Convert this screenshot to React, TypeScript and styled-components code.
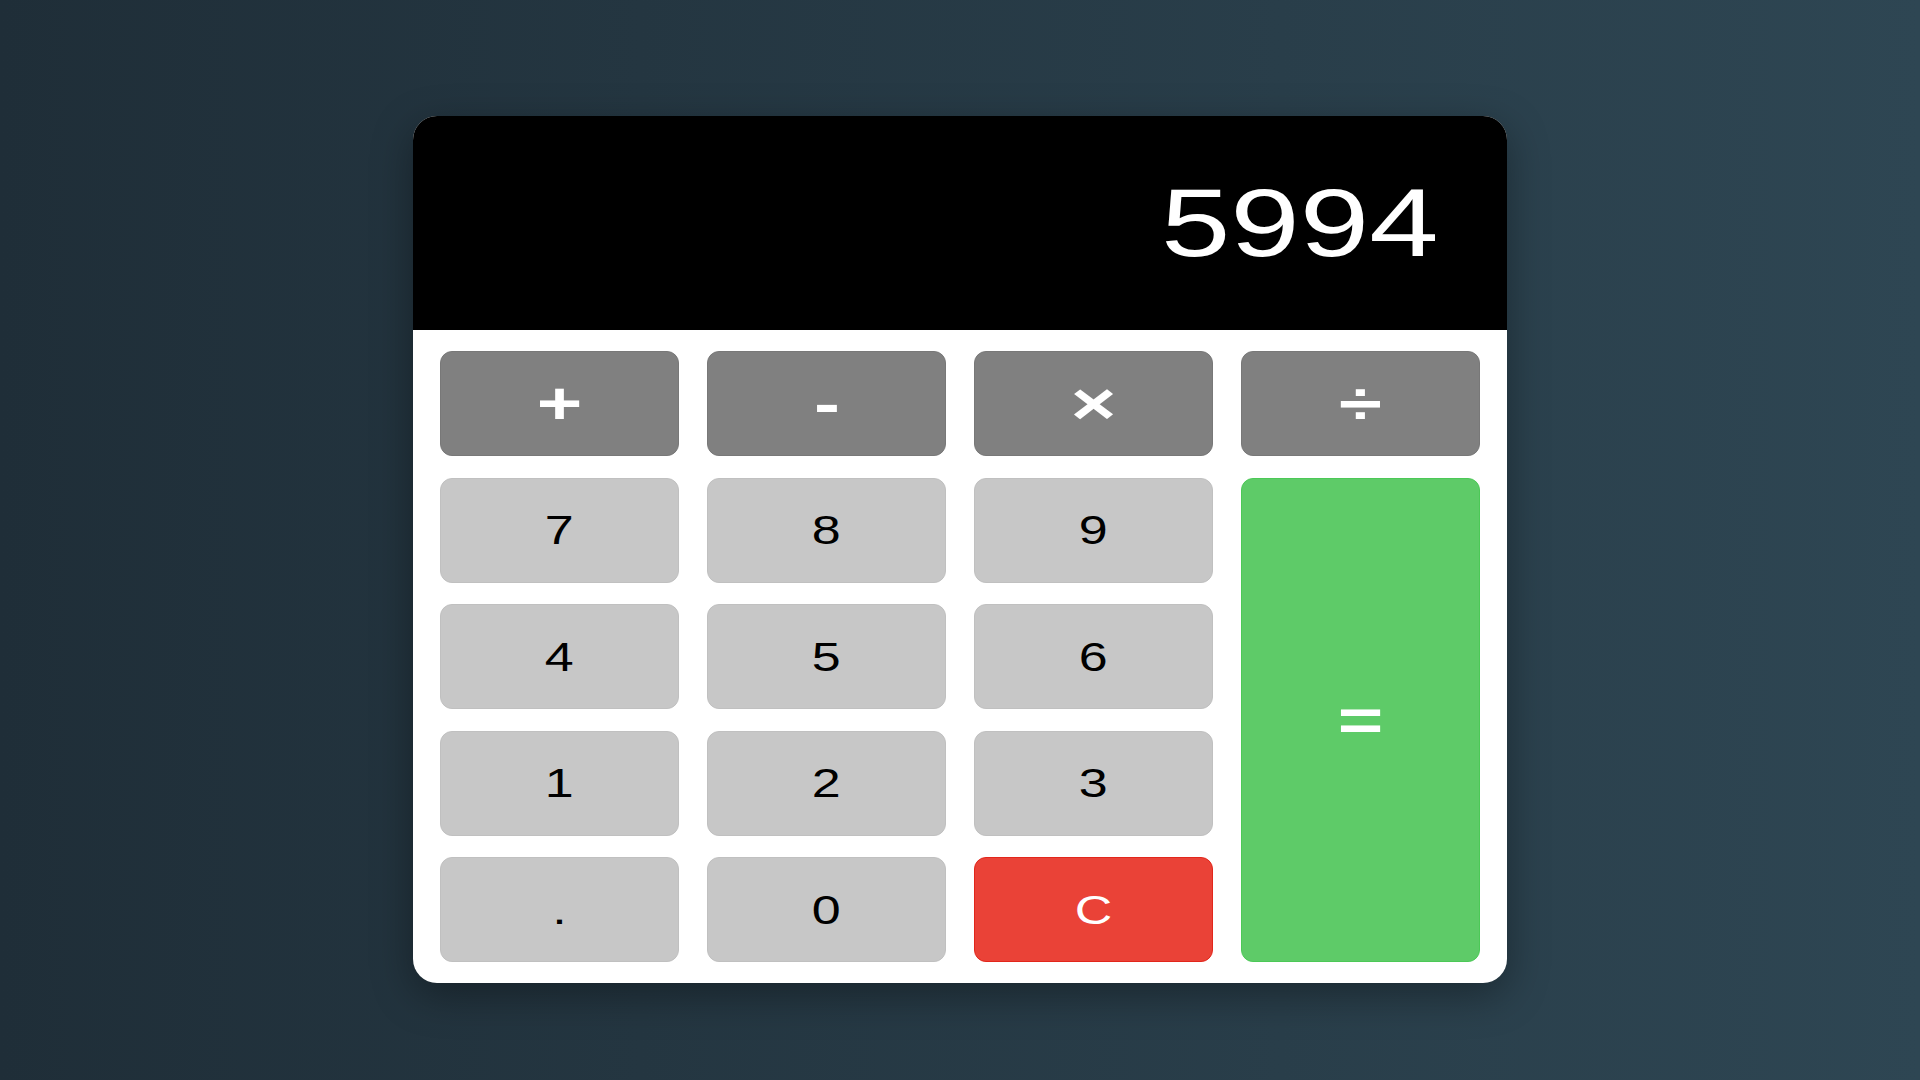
import React from "react";
import styled, { createGlobalStyle, css } from "styled-components";

const GlobalStyle = createGlobalStyle`
  html, body {
    margin: 0;
    padding: 0;
  }
  body {
    font-family: "Liberation Sans", Arial, sans-serif;
    background: linear-gradient(90deg, #1f2e38 0%, #2e4653 100%);
    min-height: 100vh;
  }
`;

const Page = styled.main`
  width: 100%;
  height: 1080px;
  display: flex;
  justify-content: center;
  align-items: flex-start;
  padding-top: 116px;
  box-sizing: border-box;
  background: linear-gradient(90deg, #1f2e38 0%, #2e4653 100%);
`;

const Calculator = styled.div`
  width: 1094px;
  background: #ffffff;
  border-radius: 24px;
  overflow: hidden;
  box-shadow: 0 12px 40px rgba(0, 0, 0, 0.35);
  display: flex;
  flex-direction: column;
`;

const Display = styled.div`
  height: 214px;
  background: #000000;
  color: #ffffff;
  display: flex;
  align-items: center;
  justify-content: flex-end;
  padding-right: 100px;
  box-sizing: border-box;
  font-size: 96px;
  font-weight: 400;
`;

const Keypad = styled.div`
  display: grid;
  grid-template-columns: repeat(4, 239px);
  grid-auto-rows: 105px;
  column-gap: 28px;
  row-gap: 21.5px;
  padding: 21px 27px;
`;

type Variant = "op" | "num" | "clear" | "equals";

const variants: Record<Variant, ReturnType<typeof css>> = {
  op: css`
    background: #808080;
    border-color: #787878;
    color: #ffffff;
    font-size: 60px;
    font-weight: 700;
  `,
  num: css`
    background: #c7c7c7;
    border-color: #c0c0c0;
    color: #000000;
    font-size: 40px;
    font-weight: 400;
  `,
  clear: css`
    background: #ea4237;
    border-color: #e2261b;
    color: #ffffff;
    font-size: 40px;
    font-weight: 400;
  `,
  equals: css`
    background: #5ecb68;
    border-color: #4cc957;
    color: #ffffff;
    font-size: 60px;
    font-weight: 700;
    grid-column: 4;
    grid-row: 2 / span 4;
  `,
};

const Key = styled.button<{ $variant: Variant }>`
  font-family: "Liberation Sans", Arial, sans-serif;
  border: 1px solid;
  border-radius: 12px;
  display: flex;
  align-items: center;
  justify-content: center;
  padding: 0;
  margin: 0;
  cursor: pointer;
  line-height: 1;
  ${({ $variant }) => variants[$variant]}
`;

const Label = styled.span`
  display: inline-block;
  transform: scaleX(1.3);
`;

const keys: { label: string; variant: Variant }[] = [
  { label: "+", variant: "op" },
  { label: "-", variant: "op" },
  { label: "×", variant: "op" },
  { label: "÷", variant: "op" },
  { label: "7", variant: "num" },
  { label: "8", variant: "num" },
  { label: "9", variant: "num" },
  { label: "=", variant: "equals" },
  { label: "4", variant: "num" },
  { label: "5", variant: "num" },
  { label: "6", variant: "num" },
  { label: "1", variant: "num" },
  { label: "2", variant: "num" },
  { label: "3", variant: "num" },
  { label: ".", variant: "num" },
  { label: "0", variant: "num" },
  { label: "C", variant: "clear" },
];

export default function App() {
  return (
    <>
      <GlobalStyle />
      <Page>
        <Calculator>
          <Display>
            <Label>5994</Label>
          </Display>
          <Keypad>
            {keys.map((k) => (
              <Key key={k.label} $variant={k.variant}>
                <Label>{k.label}</Label>
              </Key>
            ))}
          </Keypad>
        </Calculator>
      </Page>
    </>
  );
}
